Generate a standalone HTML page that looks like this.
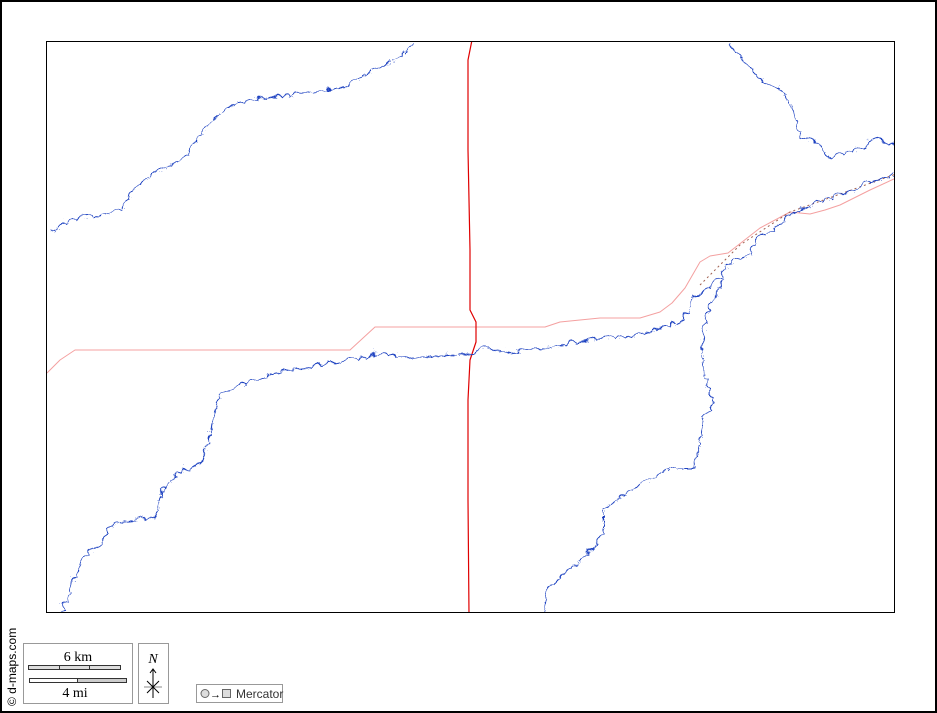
<!DOCTYPE html>
<html><head><style>
body{margin:0;width:937px;height:713px;overflow:hidden;background:#fff;font-family:"Liberation Sans",sans-serif}
</style></head><body>
<svg width="937" height="713" viewBox="0 0 937 713" style="position:absolute;left:0;top:0">
<defs>
<filter id="w" x="-5%" y="-5%" width="110%" height="110%">
<feTurbulence type="turbulence" baseFrequency="0.09" numOctaves="1" seed="5"/>
<feDisplacementMap in="SourceGraphic" scale="9" xChannelSelector="R" yChannelSelector="G"/>
</filter>
<clipPath id="c"><rect x="46" y="41" width="848" height="571"/></clipPath>
</defs>
<rect x="1" y="1" width="935" height="711" fill="#fff" stroke="#000" stroke-width="2"/>
<g clip-path="url(#c)" fill="none">
<polyline stroke="#f4a0a0" stroke-width="1" stroke-linejoin="round" points="47,373 60,360 75,350 350,350 375,327 545,327 560,322 600,318 640,318 660,312 672,303 685,288 700,262 710,256 728,253 760,228 790,212 810,214 825,210 840,205 870,190 896,178"/>
<polyline stroke="#a06050" stroke-width="1" stroke-dasharray="2,3" points="700,285 740,245 790,212 896,174"/>
<polyline stroke="#e00000" stroke-width="1.2" stroke-linejoin="round" points="472,40 468,60 468,150 470,250 470,310 476,322 476,342 470,360 468,400 468,500 469,614"/>
<g stroke="#1a3fc0" stroke-width="1" filter="url(#w)">
<polyline points="46,230 62,220 75,215 100,212 120,205 130,185 150,170 170,160 185,150 195,135 210,115 235,100 260,95 290,92 320,88 345,82 360,72 375,65 395,55 410,40"/>
<polyline points="725,40 745,60 755,75 775,85 790,105 795,125 800,135 815,140 825,155 840,150 860,145 870,135 882,140 896,142"/>
<polyline points="896,170 880,175 864,180 850,188 833,193 815,200 800,205 790,210 780,218 770,228 755,232 748,250 730,258 722,265 718,275 700,288 690,295 684,312 675,320 650,327 630,333 600,335 570,340 540,345 510,350 480,343 470,350 440,352 400,355 380,350 360,355 330,360 300,365 270,370 260,375 245,380 230,385 215,395 210,415 205,440 200,455 190,465 175,470 160,485 155,505 150,515 120,518 105,525 100,540 85,550 75,565 70,580 65,595 58,614"/>
<polyline points="720,275 712,295 704,310 702,325 698,345 700,360 705,380 710,400 700,420 695,445 690,465 665,465 650,475 630,485 615,495 600,505 600,530 590,545 575,560 560,570 545,585 540,614"/>
</g>
</g>
<rect x="46.5" y="41.5" width="848" height="571" fill="none" stroke="#000" stroke-width="1"/>
<text transform="translate(16,706) rotate(-90)" font-size="12" fill="#000" font-family="Liberation Sans,sans-serif">© d-maps.com</text>
<rect x="23.5" y="643.5" width="109" height="60" fill="#fff" stroke="#999"/>
<text x="78" y="661" font-size="14" text-anchor="middle" font-family="Liberation Serif,serif">6 km</text>
<rect x="28.5" y="665.5" width="92" height="4" fill="#ddd" stroke="#333"/>
<line x1="59.5" y1="665" x2="59.5" y2="670" stroke="#333"/><line x1="89.5" y1="665" x2="89.5" y2="670" stroke="#333"/>
<rect x="29.5" y="678.5" width="48" height="4" fill="#fff" stroke="#333"/>
<rect x="77.5" y="678.5" width="49" height="4" fill="#ccc" stroke="#333"/>
<text x="75" y="697" font-size="14" text-anchor="middle" font-family="Liberation Serif,serif">4 mi</text>
<rect x="138.5" y="643.5" width="30" height="60" fill="#fff" stroke="#999"/>
<text x="153" y="663" font-size="14" font-style="italic" text-anchor="middle" font-family="Liberation Serif,serif">N</text>
<line x1="153" y1="670" x2="153" y2="698" stroke="#000"/>
<polyline points="150,673 153,669 156,673" fill="none" stroke="#000"/>
<line x1="144" y1="687" x2="162" y2="687" stroke="#888"/>
<line x1="147" y1="681" x2="159" y2="693" stroke="#000"/><line x1="159" y1="681" x2="147" y2="693" stroke="#000"/>
<rect x="196.5" y="684.5" width="86" height="18" fill="#fff" stroke="#999"/>
<circle cx="205" cy="693.5" r="4" fill="#ddd" stroke="#666"/>
<text x="210" y="698" font-size="11">→</text>
<rect x="222.5" y="689.5" width="8" height="8" fill="#ddd" stroke="#666"/>
<text x="236" y="698" font-size="12" fill="#333">Mercator</text>
</svg>
</body></html>
